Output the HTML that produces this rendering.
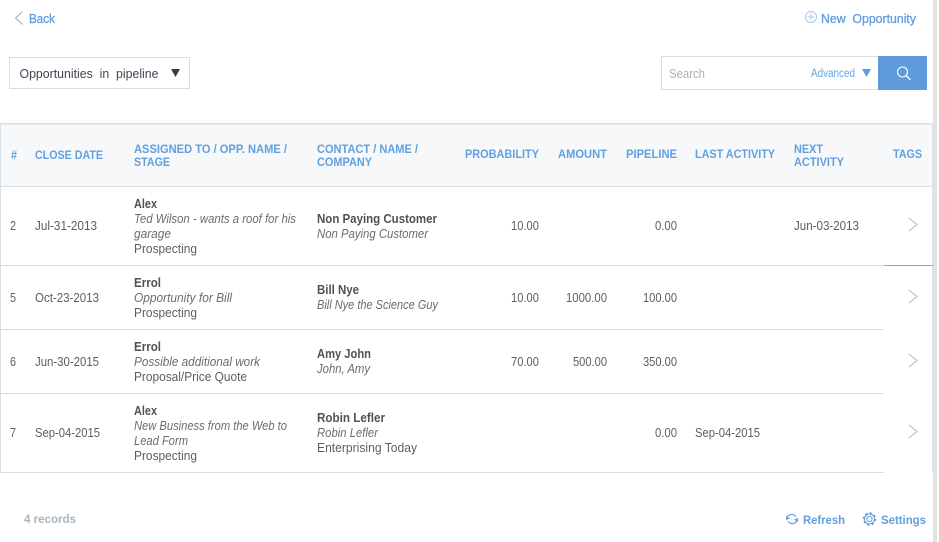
<!DOCTYPE html>
<html><head><meta charset="utf-8"><style>
html,body{margin:0;padding:0;background:#fff;width:939px;height:542px;overflow:hidden}
svg{display:block}
text{font-family:"Liberation Sans",sans-serif;font-size:12.5px;fill:#5e5e5e}
.h{font-size:11.5px;font-weight:bold;fill:#629fdf}
.b{font-weight:bold;fill:#525252}
.i{font-style:italic;fill:#6c6c6c}
.l{fill:#629fdf;font-weight:bold;font-size:12px}
.m{fill:#5f9edf;stroke:#5f9edf;stroke-width:.3;font-size:12.5px}
</style></head><body>
<svg width="939" height="542" viewBox="0 0 939 542" xmlns="http://www.w3.org/2000/svg">
<rect x="933" y="0" width="4" height="542" fill="#e2e2e2"/>
<!-- top -->
<path d="M22.5 11.5 L15.5 18 L22.5 24.5" fill="none" stroke="#a5adb4" stroke-width="1"/>
<text x="29" y="23" textLength="26" lengthAdjust="spacingAndGlyphs" class="m">Back</text>
<circle cx="811" cy="17" r="5.5" fill="none" stroke="#a9c8ea" stroke-width="1"/>
<path d="M811 13.5V20.500M807.500 17H814.500" stroke="#a9c8ea" stroke-width="1"/>
<text x="821" y="23" textLength="95" lengthAdjust="spacingAndGlyphs" class="m" xml:space="preserve">New  Opportunity</text>
<rect x="9.500" y="57.500" width="180" height="31" fill="#fff" stroke="#d8dde1"/>
<text x="19.500" y="78" textLength="139" lengthAdjust="spacingAndGlyphs" style="fill:#3c4756" xml:space="preserve">Opportunities  in  pipeline</text>
<path d="M171 69H180L175.500 77Z" fill="#2f3d50"/>
<rect x="661.500" y="56.500" width="217" height="33" fill="#fff" stroke="#d8dde1"/>
<text x="669" y="78" textLength="36" lengthAdjust="spacingAndGlyphs" style="fill:#a8b0b6;font-size:12.500px">Search</text>
<text x="811" y="77" textLength="44" lengthAdjust="spacingAndGlyphs" style="fill:#6ba3de;font-size:11.500px">Advanced</text>
<path d="M862 69H871L866.500 77Z" fill="#5f9edf"/>
<rect x="878" y="56" width="49" height="34" fill="#5f9bdb"/>
<circle cx="902.500" cy="72" r="5" fill="none" stroke="#fff" stroke-width="1.100"/>
<path d="M906 75.500L910.500 80" stroke="#fff" stroke-width="1.300"/>
<!-- table -->
<rect x="0" y="123" width="933" height="64" fill="#f6f8fa"/>
<rect x="0" y="123" width="933" height="1.500" fill="#d6dde3"/>
<rect x="0" y="186" width="933" height="1" fill="#d6dde3"/>
<rect x="0" y="123" width="1" height="350" fill="#d6dfe6"/>
<rect x="932" y="123" width="1" height="350" fill="#dde3e8"/>
<rect x="0" y="265" width="884" height="1" fill="#d8dde1"/>
<rect x="884" y="265" width="49" height="1" fill="#9ba6b1"/>
<rect x="0" y="329" width="884" height="1" fill="#d8dde1"/>
<rect x="0" y="393" width="884" height="1" fill="#d8dde1"/>
<rect x="0" y="472" width="884" height="1" fill="#d8dde1"/>
<!-- header -->
<text class="h" x="11" y="159" textLength="6" lengthAdjust="spacingAndGlyphs">#</text>
<text class="h" x="35" y="159" textLength="68" lengthAdjust="spacingAndGlyphs">CLOSE DATE</text>
<text class="h" x="134" y="153" textLength="153" lengthAdjust="spacingAndGlyphs">ASSIGNED TO / OPP. NAME /</text>
<text class="h" x="134" y="166" textLength="36" lengthAdjust="spacingAndGlyphs">STAGE</text>
<text class="h" x="317" y="153" textLength="101" lengthAdjust="spacingAndGlyphs">CONTACT / NAME /</text>
<text class="h" x="317" y="166" textLength="55" lengthAdjust="spacingAndGlyphs">COMPANY</text>
<text class="h" x="465" y="158" textLength="74" lengthAdjust="spacingAndGlyphs">PROBABILITY</text>
<text class="h" x="558" y="158" textLength="49" lengthAdjust="spacingAndGlyphs">AMOUNT</text>
<text class="h" x="626" y="158" textLength="51" lengthAdjust="spacingAndGlyphs">PIPELINE</text>
<text class="h" x="695" y="158" textLength="80" lengthAdjust="spacingAndGlyphs">LAST ACTIVITY</text>
<text class="h" x="794" y="153" textLength="29" lengthAdjust="spacingAndGlyphs">NEXT</text>
<text class="h" x="794" y="166" textLength="50" lengthAdjust="spacingAndGlyphs">ACTIVITY</text>
<text class="h" x="893" y="158" textLength="29" lengthAdjust="spacingAndGlyphs">TAGS</text>
<!-- row 1 -->
<text x="10" y="230" textLength="6" lengthAdjust="spacingAndGlyphs">2</text>
<text x="35" y="230" textLength="62" lengthAdjust="spacingAndGlyphs">Jul-31-2013</text>
<text class="b" x="134" y="208" textLength="23" lengthAdjust="spacingAndGlyphs">Alex</text>
<text class="i" x="134" y="223" textLength="162" lengthAdjust="spacingAndGlyphs">Ted Wilson - wants a roof for his</text>
<text class="i" x="134" y="238" textLength="37" lengthAdjust="spacingAndGlyphs">garage</text>
<text x="134" y="253" textLength="63" lengthAdjust="spacingAndGlyphs">Prospecting</text>
<text class="b" x="317" y="223" textLength="120" lengthAdjust="spacingAndGlyphs">Non Paying Customer</text>
<text class="i" x="317" y="238" textLength="111" lengthAdjust="spacingAndGlyphs">Non Paying Customer</text>
<text x="511" y="230" textLength="28" lengthAdjust="spacingAndGlyphs">10.00</text>
<text x="655" y="230" textLength="22" lengthAdjust="spacingAndGlyphs">0.00</text>
<text x="794" y="230" textLength="65" lengthAdjust="spacingAndGlyphs">Jun-03-2013</text>
<path d="M909 218L917 224.500L909 231" fill="none" stroke="#b2b7bc" stroke-width="1"/>
<!-- row 2 -->
<text x="10" y="302" textLength="6" lengthAdjust="spacingAndGlyphs">5</text>
<text x="35" y="302" textLength="64" lengthAdjust="spacingAndGlyphs">Oct-23-2013</text>
<text class="b" x="134" y="287" textLength="27" lengthAdjust="spacingAndGlyphs">Errol</text>
<text class="i" x="134" y="302" textLength="98" lengthAdjust="spacingAndGlyphs">Opportunity for Bill</text>
<text x="134" y="317" textLength="63" lengthAdjust="spacingAndGlyphs">Prospecting</text>
<text class="b" x="317" y="294" textLength="42" lengthAdjust="spacingAndGlyphs">Bill Nye</text>
<text class="i" x="317" y="309" textLength="121" lengthAdjust="spacingAndGlyphs">Bill Nye the Science Guy</text>
<text x="511" y="302" textLength="28" lengthAdjust="spacingAndGlyphs">10.00</text>
<text x="566" y="302" textLength="41" lengthAdjust="spacingAndGlyphs">1000.00</text>
<text x="643" y="302" textLength="34" lengthAdjust="spacingAndGlyphs">100.00</text>
<path d="M909 290L917 296.500L909 303" fill="none" stroke="#b2b7bc" stroke-width="1"/>
<!-- row 3 -->
<text x="10" y="366" textLength="6" lengthAdjust="spacingAndGlyphs">6</text>
<text x="35" y="366" textLength="64" lengthAdjust="spacingAndGlyphs">Jun-30-2015</text>
<text class="b" x="134" y="351" textLength="27" lengthAdjust="spacingAndGlyphs">Errol</text>
<text class="i" x="134" y="366" textLength="126" lengthAdjust="spacingAndGlyphs">Possible additional work</text>
<text x="134" y="381" textLength="113" lengthAdjust="spacingAndGlyphs">Proposal/Price Quote</text>
<text class="b" x="317" y="358" textLength="54" lengthAdjust="spacingAndGlyphs">Amy John</text>
<text class="i" x="317" y="373" textLength="53" lengthAdjust="spacingAndGlyphs">John, Amy</text>
<text x="511" y="366" textLength="28" lengthAdjust="spacingAndGlyphs">70.00</text>
<text x="573" y="366" textLength="34" lengthAdjust="spacingAndGlyphs">500.00</text>
<text x="643" y="366" textLength="34" lengthAdjust="spacingAndGlyphs">350.00</text>
<path d="M909 354L917 360.500L909 367" fill="none" stroke="#b2b7bc" stroke-width="1"/>
<!-- row 4 -->
<text x="10" y="437" textLength="6" lengthAdjust="spacingAndGlyphs">7</text>
<text x="35" y="437" textLength="65" lengthAdjust="spacingAndGlyphs">Sep-04-2015</text>
<text class="b" x="134" y="415" textLength="23" lengthAdjust="spacingAndGlyphs">Alex</text>
<text class="i" x="134" y="430" textLength="153" lengthAdjust="spacingAndGlyphs">New Business from the Web to</text>
<text class="i" x="134" y="445" textLength="54" lengthAdjust="spacingAndGlyphs">Lead Form</text>
<text x="134" y="460" textLength="63" lengthAdjust="spacingAndGlyphs">Prospecting</text>
<text class="b" x="317" y="422" textLength="68" lengthAdjust="spacingAndGlyphs">Robin Lefler</text>
<text class="i" x="317" y="437" textLength="61" lengthAdjust="spacingAndGlyphs">Robin Lefler</text>
<text x="317" y="452" textLength="100" lengthAdjust="spacingAndGlyphs">Enterprising Today</text>
<text x="655" y="437" textLength="22" lengthAdjust="spacingAndGlyphs">0.00</text>
<text x="695" y="437" textLength="65" lengthAdjust="spacingAndGlyphs">Sep-04-2015</text>
<path d="M909 425L917 431.500L909 438" fill="none" stroke="#b2b7bc" stroke-width="1"/>
<!-- footer -->
<text x="24" y="523" textLength="52" lengthAdjust="spacingAndGlyphs" style="font-weight:bold;fill:#a9b5c0;font-size:12px">4 records</text>
<path d="M787 517.500A5 5 0 0 1 796 517M797 520.500A5 5 0 0 1 788 521" fill="none" stroke="#5f9edf" stroke-width="1.100"/>
<path d="M786 516L790 518.500L786 520ZM798 522L794 519.500L798 518Z" fill="#5f9edf"/>
<text x="803" y="524" textLength="42" lengthAdjust="spacingAndGlyphs" class="l">Refresh</text>
<circle cx="869.500" cy="519" r="2.600" fill="none" stroke="#5f9edf" stroke-width="1"/>
<circle cx="869.500" cy="519" r="5" fill="none" stroke="#5f9edf" stroke-width="1"/>
<circle cx="869.500" cy="519" r="6" fill="none" stroke="#5f9edf" stroke-width="1.400" stroke-dasharray="2.200 2.510"/>
<text x="881" y="524" textLength="45" lengthAdjust="spacingAndGlyphs" class="l">Settings</text>
</svg>
</body></html>
